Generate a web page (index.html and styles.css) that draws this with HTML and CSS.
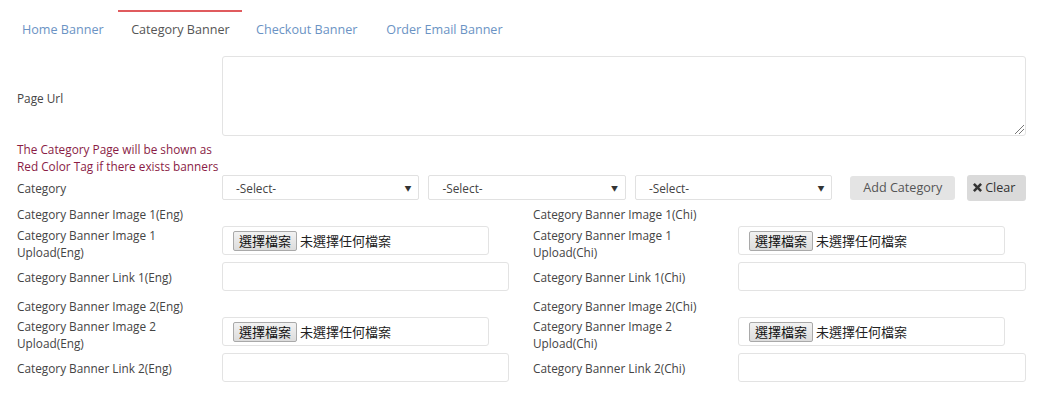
FILE: index.html
```html
<!DOCTYPE html>
<html>
<head>
<meta charset="utf-8">
<link rel="stylesheet" href="styles.css">
</head>
<body>
<div class="page">
  <ul class="tabs">
    <li class="tab"><a>Home Banner</a></li>
    <li class="tab active"><a>Category Banner</a></li>
    <li class="tab"><a>Checkout Banner</a></li>
    <li class="tab"><a>Order Email Banner</a></li>
  </ul>

  <div class="row url-row">
    <label class="lbl url-lbl">Page Url</label>
    <div class="field"><div class="textarea"><span class="grip"></span></div></div>
  </div>

  <p class="note">The Category Page will be shown as<br>Red Color Tag if there exists banners</p>

  <div class="row cat-row">
    <label class="lbl low">Category</label>
    <div class="field cat-fields">
      <div class="select"><span>-Select-</span><span class="arrow">&#9660;</span></div>
      <div class="select"><span>-Select-</span><span class="arrow">&#9660;</span></div>
      <div class="select"><span>-Select-</span><span class="arrow">&#9660;</span></div>
      <button class="btn btn-add">Add Category</button>
      <button class="btn btn-clear"><svg class="x-icon" viewBox="0 0 10 10" width="9" height="9"><path d="M2 0 L5 3 L8 0 L10 2 L7 5 L10 8 L8 10 L5 7 L2 10 L0 8 L3 5 L0 2 Z" fill="#333"/></svg>Clear</button>
    </div>
  </div>

  <div class="cols">
    <div class="col">
      <div class="plain">Category Banner Image 1(Eng)</div>
      <div class="row up-row">
        <label class="lbl">Category Banner Image 1<br>Upload(Eng)</label>
        <div class="field"><div class="file"><span class="file-btn">選擇檔案</span><span class="file-txt">未選擇任何檔案</span></div></div>
      </div>
      <div class="row link-row">
        <label class="lbl low">Category Banner Link 1(Eng)</label>
        <div class="field"><div class="input"></div></div>
      </div>
      <div class="plain second">Category Banner Image 2(Eng)</div>
      <div class="row up-row up2">
        <label class="lbl">Category Banner Image 2<br>Upload(Eng)</label>
        <div class="field"><div class="file"><span class="file-btn">選擇檔案</span><span class="file-txt">未選擇任何檔案</span></div></div>
      </div>
      <div class="row link-row">
        <label class="lbl low">Category Banner Link 2(Eng)</label>
        <div class="field"><div class="input"></div></div>
      </div>
    </div>
    <div class="col">
      <div class="plain">Category Banner Image 1(Chi)</div>
      <div class="row up-row">
        <label class="lbl">Category Banner Image 1<br>Upload(Chi)</label>
        <div class="field"><div class="file"><span class="file-btn">選擇檔案</span><span class="file-txt">未選擇任何檔案</span></div></div>
      </div>
      <div class="row link-row">
        <label class="lbl low">Category Banner Link 1(Chi)</label>
        <div class="field"><div class="input"></div></div>
      </div>
      <div class="plain second">Category Banner Image 2(Chi)</div>
      <div class="row up-row up2">
        <label class="lbl">Category Banner Image 2<br>Upload(Chi)</label>
        <div class="field"><div class="file"><span class="file-btn">選擇檔案</span><span class="file-txt">未選擇任何檔案</span></div></div>
      </div>
      <div class="row link-row">
        <label class="lbl low">Category Banner Link 2(Chi)</label>
        <div class="field"><div class="input"></div></div>
      </div>
    </div>
  </div>
</div>
</body>
</html>
```

FILE: styles.css
```css
* { box-sizing: border-box; }
html, body { margin: 0; padding: 0; background: #fff; }
body {
  font-family: "Open Sans", "Noto Sans CJK TC", sans-serif;
  font-size: 11.8px;
  line-height: 17px;
  color: #444;
}
.page { width: 1061px; padding: 10px 35px 0 17px; }

.tabs {
  list-style: none;
  margin: 0 0 0 -9.5px;
  padding: 0;
  display: flex;
  height: 46px;
}
.tab {
  border-top: 2px solid transparent;
  padding: 9px 14.5px 0;
  font-size: 12.6px;
  line-height: 17px;
}
.tab a { color: #6b93c4; }
.tab.active { border-top-color: #e05b5e; padding: 9px 12px 0 13px; }
.tab.active a { color: #555; }

.row { display: flex; align-items: center; }
.lbl { width: 205px; flex: none; }
.url-lbl { padding-top: 4px; }
.low { padding-top: 2px; }
.field { flex: 1; min-width: 0; }

.textarea {
  height: 80px;
  border: 1px solid #e3e3e3;
  border-radius: 3px;
  position: relative;
}
.grip {
  position: absolute;
  right: 1px;
  bottom: 1px;
  width: 9px;
  height: 9px;
  background: linear-gradient(135deg, transparent 45%, #777 45%, #777 52%, transparent 52%, transparent 68%, #777 68%, #777 75%, transparent 75%);
}

.note {
  margin: 5px 0 0;
  color: #8a1c45;
  line-height: 17px;
}

.cat-row { height: 25px; }
.cat-fields { display: flex; align-items: center; }
.select {
  width: 198px;
  height: 25px;
  border: 1px solid #e1e1e1;
  border-radius: 2px;
  margin-right: 9px;
  display: flex;
  align-items: center;
  justify-content: space-between;
  padding: 1px 7px 0 13px;
  color: #444;
}
.arrow { font-size: 7px; color: #333; }
.btn {
  font-family: "Open Sans", sans-serif;
  font-size: 12.6px;
  color: #555;
  border: none;
  border-radius: 3px;
  height: 24px;
  padding: 0;
  white-space: nowrap;
}
.btn-add { background: #e4e4e4; margin-left: 9px; width: 105px; }
.btn-clear {
  background: #dadada;
  margin-left: 12px;
  width: 59px;
  height: 26px;
  padding: 0 0 0 6px;
  display: flex;
  align-items: center;
  gap: 3px;
  color: #333;
}
.x-icon { flex: none; }

.cols { display: flex; gap: 24px; margin-top: 6px; }
.col { width: 493px; }
.col:first-child { width: 492px; }
.plain { height: 17px; }
.plain.second { margin-top: 7px; }

.up-row { margin-top: 3px; align-items: flex-start; }
.up-row .lbl { padding-top: 1px; }
.up2 { margin-top: 2px; }
.file {
  width: 267px;
  height: 29px;
  border: 1px solid #e3e3e3;
  border-radius: 3px;
  display: flex;
  align-items: center;
  padding-left: 10px;
  font-family: "Noto Sans CJK TC", sans-serif;
  font-size: 13px;
  color: #222;
}
.file-btn {
  display: inline-block;
  height: 20px;
  line-height: 18px;
  padding: 0 5px;
  border: 1px solid #a9a9a9;
  border-radius: 2px;
  background: linear-gradient(#f2f2f2, #dcdcdc);
  margin-right: 3px;
  color: #111;
}
.link-row { margin-top: 1px; }
.input {
  height: 29px;
  border: 1px solid #e3e3e3;
  border-radius: 3px;
}
```
